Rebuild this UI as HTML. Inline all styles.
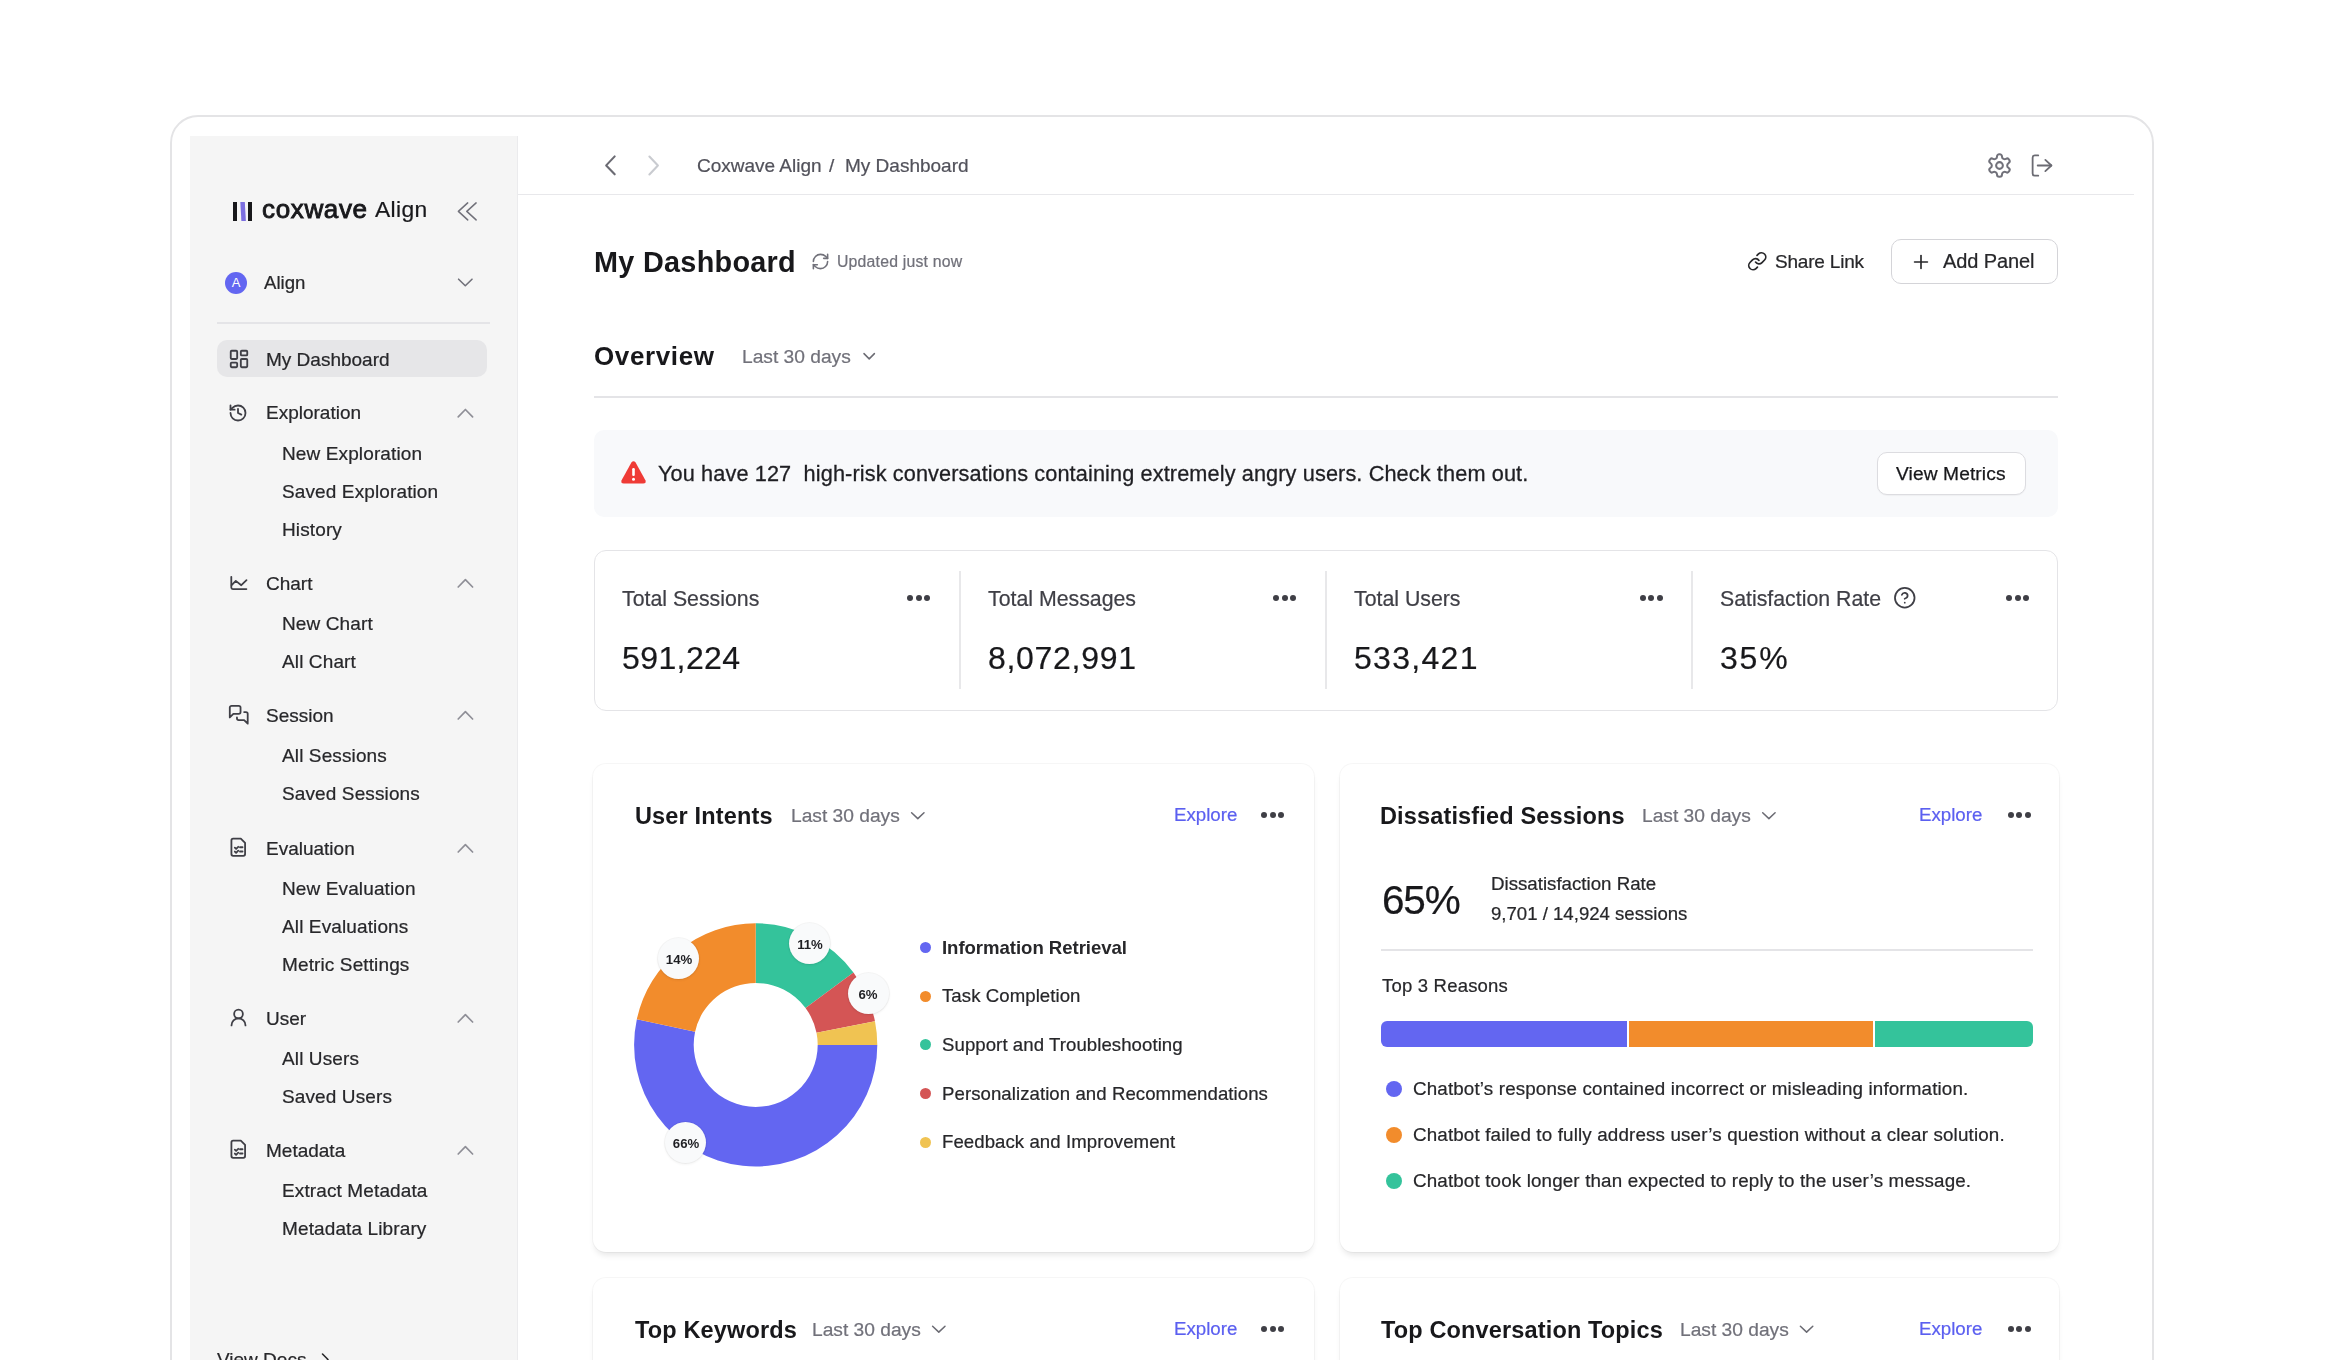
<!DOCTYPE html><html><head><meta charset="utf-8"><style>
html,body{margin:0;padding:0;width:2340px;height:1360px;overflow:hidden;background:#ffffff;}
body{position:relative;font-family:"Liberation Sans",sans-serif;}
.t{will-change:transform}
.t{position:absolute;white-space:nowrap;}
svg{overflow:visible}
</style></head><body>
<div style="position:absolute;left:170px;top:115px;width:1984px;height:1400px;border:2px solid #e4e4e6;border-radius:28px;background:#fff;box-sizing:border-box"></div>
<div style="position:absolute;left:190px;top:136px;width:328px;height:1300px;background:#f5f5f5;border-right:1px solid #ebebed;box-sizing:border-box"></div>
<div style="position:absolute;left:232.6px;top:202px;width:4.2px;height:19px;background:#18181b"></div>
<svg style="position:absolute;left:238px;top:202px;" width="10" height="19" viewBox="0 0 10 19" fill="none"><polygon points="2.3,0 6.8,0 7.9,19 3.4,19" fill="#7c6fe0"/></svg>
<div style="position:absolute;left:248.1px;top:202px;width:4.2px;height:19px;background:#18181b"></div>
<div class="t" style="left:262.0px;top:195.1px;font-size:26px;line-height:29.04px;color:#18181b;font-weight:400;letter-spacing:0.65px;-webkit-text-stroke:0.9px #18181b">coxwave</div>
<div class="t" style="left:375.0px;top:197.4px;font-size:22.8px;line-height:25.47px;color:#18181b;font-weight:400;letter-spacing:0.4px;-webkit-text-stroke:0.22px #18181b;">Align</div>
<div style="position:absolute;left:225px;top:272px;width:22px;height:22px;border-radius:50%;background:#6366f1;color:#fff;font-size:13px;line-height:22px;text-align:center;font-family:'Liberation Sans',sans-serif">A</div>
<div class="t" style="left:263.7px;top:272.7px;font-size:18.6px;line-height:20.78px;color:#27272a;font-weight:400;letter-spacing:0px;-webkit-text-stroke:0.22px #27272a;">Align</div>
<div style="position:absolute;left:217px;top:322px;width:273px;height:1.5px;background:#e4e4e7"></div>
<div style="position:absolute;left:217px;top:340px;width:270px;height:37px;background:#e6e6e8;border-radius:10px"></div>
<svg style="position:absolute;left:227.5px;top:347.5px;" width="22" height="22" viewBox="0 0 24 24" fill="none"><g stroke="#3f3f46" stroke-width="2" stroke-linecap="round" stroke-linejoin="round"><rect x="3" y="3" width="7" height="9" rx="1"/><rect x="14" y="3" width="7" height="5" rx="1"/><rect x="14" y="12" width="7" height="9" rx="1"/><rect x="3" y="16" width="7" height="5" rx="1"/></g></svg>
<div class="t" style="left:266.4px;top:348.6px;font-size:19px;line-height:21.22px;color:#27272a;font-weight:400;letter-spacing:0px;-webkit-text-stroke:0.22px #27272a;">My Dashboard</div>
<svg style="position:absolute;left:228.4px;top:402.6px;" width="20" height="20" viewBox="0 0 24 24" fill="none"><g stroke="#3f3f46" stroke-width="2.16" stroke-linecap="round" stroke-linejoin="round"><path d="M3 12a9 9 0 1 0 9-9 9.75 9.75 0 0 0-6.74 2.74L3 8"/><path d="M3 3v5h5"/><path d="M12 7v5l4 2"/></g></svg>
<div class="t" style="left:266.4px;top:402.4px;font-size:19px;line-height:21.22px;color:#27272a;font-weight:400;letter-spacing:0px;-webkit-text-stroke:0.22px #27272a;">Exploration</div>
<div class="t" style="left:282.0px;top:442.9px;font-size:19px;line-height:21.22px;color:#27272a;font-weight:400;letter-spacing:0.12px;-webkit-text-stroke:0.22px #27272a;">New Exploration</div>
<div class="t" style="left:282.0px;top:480.9px;font-size:19px;line-height:21.22px;color:#27272a;font-weight:400;letter-spacing:0.12px;-webkit-text-stroke:0.22px #27272a;">Saved Exploration</div>
<div class="t" style="left:282.0px;top:518.9px;font-size:19px;line-height:21.22px;color:#27272a;font-weight:400;letter-spacing:0.12px;-webkit-text-stroke:0.22px #27272a;">History</div>
<div class="t" style="left:266.4px;top:572.6px;font-size:19px;line-height:21.22px;color:#27272a;font-weight:400;letter-spacing:0px;-webkit-text-stroke:0.22px #27272a;">Chart</div>
<svg style="position:absolute;left:0;top:0" width="2340" height="1360"><g stroke="#3f3f46" stroke-width="1.8" fill="none" stroke-linecap="round" stroke-linejoin="round"><path d="M231.3 576.8 V587.5999999999999 Q231.3 589.0999999999999 232.8 589.0999999999999 H246.4"/><path d="M231.6 585.1999999999999 L235.8 580.9 L241.3 585.1999999999999 L246.5 580.1999999999999"/></g></svg>
<div class="t" style="left:282.0px;top:613.1px;font-size:19px;line-height:21.22px;color:#27272a;font-weight:400;letter-spacing:0.12px;-webkit-text-stroke:0.22px #27272a;">New Chart</div>
<div class="t" style="left:282.0px;top:651.1px;font-size:19px;line-height:21.22px;color:#27272a;font-weight:400;letter-spacing:0.12px;-webkit-text-stroke:0.22px #27272a;">All Chart</div>
<svg style="position:absolute;left:227.85px;top:704.4499999999999px;" width="21.5" height="21.5" viewBox="0 0 24 24" fill="none"><g stroke="#3f3f46" stroke-width="2.0093023255813955" stroke-linecap="round" stroke-linejoin="round"><path d="M14 9a2 2 0 0 1-2 2H6l-4 4V4a2 2 0 0 1 2-2h8a2 2 0 0 1 2 2z"/><path d="M18 9h2a2 2 0 0 1 2 2v11l-4-4h-6a2 2 0 0 1-2-2v-1"/></g></svg>
<div class="t" style="left:266.4px;top:704.6px;font-size:19px;line-height:21.22px;color:#27272a;font-weight:400;letter-spacing:0px;-webkit-text-stroke:0.22px #27272a;">Session</div>
<div class="t" style="left:282.0px;top:745.1px;font-size:19px;line-height:21.22px;color:#27272a;font-weight:400;letter-spacing:0.12px;-webkit-text-stroke:0.22px #27272a;">All Sessions</div>
<div class="t" style="left:282.0px;top:783.1px;font-size:19px;line-height:21.22px;color:#27272a;font-weight:400;letter-spacing:0.12px;-webkit-text-stroke:0.22px #27272a;">Saved Sessions</div>
<svg style="position:absolute;left:228.35px;top:837.3499999999999px;" width="20.5" height="20.5" viewBox="0 0 24 24" fill="none"><g stroke="#3f3f46" stroke-width="2.107317073170732" stroke-linecap="round" stroke-linejoin="round"><path d="M15 2H6a2 2 0 0 0-2 2v16a2 2 0 0 0 2 2h12a2 2 0 0 0 2-2V7z"/><path d="M8 12.5l1.5 1.5 2.5-2.5"/><path d="M8 17l1.5 1.5 2.5-2.5"/><path d="M14 12h3"/><path d="M14 17h3"/></g></svg>
<div class="t" style="left:266.4px;top:837.6px;font-size:19px;line-height:21.22px;color:#27272a;font-weight:400;letter-spacing:0px;-webkit-text-stroke:0.22px #27272a;">Evaluation</div>
<div class="t" style="left:282.0px;top:878.1px;font-size:19px;line-height:21.22px;color:#27272a;font-weight:400;letter-spacing:0.12px;-webkit-text-stroke:0.22px #27272a;">New Evaluation</div>
<div class="t" style="left:282.0px;top:916.1px;font-size:19px;line-height:21.22px;color:#27272a;font-weight:400;letter-spacing:0.12px;-webkit-text-stroke:0.22px #27272a;">All Evaluations</div>
<div class="t" style="left:282.0px;top:954.1px;font-size:19px;line-height:21.22px;color:#27272a;font-weight:400;letter-spacing:0.12px;-webkit-text-stroke:0.22px #27272a;">Metric Settings</div>
<svg style="position:absolute;left:228.1px;top:1007.1999999999999px;" width="21" height="21" viewBox="0 0 24 24" fill="none"><g stroke="#3f3f46" stroke-width="2.0571428571428574" stroke-linecap="round" stroke-linejoin="round"><circle cx="12" cy="8" r="5"/><path d="M20 21a8 8 0 0 0-16 0"/></g></svg>
<div class="t" style="left:266.4px;top:1007.6px;font-size:19px;line-height:21.22px;color:#27272a;font-weight:400;letter-spacing:0px;-webkit-text-stroke:0.22px #27272a;">User</div>
<div class="t" style="left:282.0px;top:1048.1px;font-size:19px;line-height:21.22px;color:#27272a;font-weight:400;letter-spacing:0.12px;-webkit-text-stroke:0.22px #27272a;">All Users</div>
<div class="t" style="left:282.0px;top:1086.1px;font-size:19px;line-height:21.22px;color:#27272a;font-weight:400;letter-spacing:0.12px;-webkit-text-stroke:0.22px #27272a;">Saved Users</div>
<svg style="position:absolute;left:228.35px;top:1139.35px;" width="20.5" height="20.5" viewBox="0 0 24 24" fill="none"><g stroke="#3f3f46" stroke-width="2.107317073170732" stroke-linecap="round" stroke-linejoin="round"><path d="M15 2H6a2 2 0 0 0-2 2v16a2 2 0 0 0 2 2h12a2 2 0 0 0 2-2V7z"/><path d="M8 12.5l1.5 1.5 2.5-2.5"/><path d="M8 17l1.5 1.5 2.5-2.5"/><path d="M14 12h3"/><path d="M14 17h3"/></g></svg>
<div class="t" style="left:266.4px;top:1139.6px;font-size:19px;line-height:21.22px;color:#27272a;font-weight:400;letter-spacing:0px;-webkit-text-stroke:0.22px #27272a;">Metadata</div>
<div class="t" style="left:282.0px;top:1180.1px;font-size:19px;line-height:21.22px;color:#27272a;font-weight:400;letter-spacing:0.12px;-webkit-text-stroke:0.22px #27272a;">Extract Metadata</div>
<div class="t" style="left:282.0px;top:1218.1px;font-size:19px;line-height:21.22px;color:#27272a;font-weight:400;letter-spacing:0.12px;-webkit-text-stroke:0.22px #27272a;">Metadata Library</div>
<div class="t" style="left:217.4px;top:1348.8px;font-size:19px;line-height:21.22px;color:#27272a;font-weight:400;letter-spacing:0px;-webkit-text-stroke:0.22px #27272a;">View Docs</div>
<div style="position:absolute;left:518px;top:193.8px;width:1616px;height:1.6px;background:#e8e8eb"></div>
<div class="t" style="left:696.7px;top:155.3px;font-size:19px;line-height:21.22px;color:#52525b;font-weight:400;letter-spacing:0px;-webkit-text-stroke:0.22px #52525b;">Coxwave Align</div>
<div class="t" style="left:829.0px;top:155.3px;font-size:19px;line-height:21.22px;color:#52525b;font-weight:400;letter-spacing:0px;-webkit-text-stroke:0.22px #52525b;">/</div>
<div class="t" style="left:845.4px;top:155.3px;font-size:19px;line-height:21.22px;color:#52525b;font-weight:400;letter-spacing:0px;-webkit-text-stroke:0.22px #52525b;">My Dashboard</div>
<svg style="position:absolute;left:1985.5px;top:152px;" width="27" height="27" viewBox="0 0 24 24" fill="none"><g stroke="#71717a" stroke-width="1.8" stroke-linecap="round" stroke-linejoin="round"><path d="M12.22 2h-.44a2 2 0 0 0-2 2v.18a2 2 0 0 1-1 1.73l-.43.25a2 2 0 0 1-2 0l-.15-.08a2 2 0 0 0-2.73.73l-.22.38a2 2 0 0 0 .73 2.73l.15.1a2 2 0 0 1 1 1.72v.51a2 2 0 0 1-1 1.74l-.15.09a2 2 0 0 0-.73 2.73l.22.38a2 2 0 0 0 2.73.73l.15-.08a2 2 0 0 1 2 0l.43.25a2 2 0 0 1 1 1.73V20a2 2 0 0 0 2 2h.44a2 2 0 0 0 2-2v-.18a2 2 0 0 1 1-1.73l.43-.25a2 2 0 0 1 2 0l.15.08a2 2 0 0 0 2.73-.73l.22-.39a2 2 0 0 0-.73-2.73l-.15-.08a2 2 0 0 1-1-1.74v-.5a2 2 0 0 1 1-1.74l.15-.09a2 2 0 0 0 .73-2.73l-.22-.38a2 2 0 0 0-2.73-.73l-.15.08a2 2 0 0 1-2 0l-.43-.25a2 2 0 0 1-1-1.73V4a2 2 0 0 0-2-2z"/><circle cx="12" cy="12" r="3"/></g></svg>
<svg style="position:absolute;left:2026.5px;top:152px;" width="27" height="27" viewBox="0 0 24 24" fill="none"><g stroke="#6b6b73" stroke-width="1.6" stroke-linecap="round" stroke-linejoin="round"><path d="M10 3H7a2 2 0 0 0-2 2v14a2 2 0 0 0 2 2h3"/><path d="M16.3 7l5.4 5-5.4 5"/><path d="M21.6 12H9.5"/></g></svg>
<div class="t" style="left:594.0px;top:245.8px;font-size:28.8px;line-height:32.17px;color:#18181b;font-weight:700;letter-spacing:0.3px;">My Dashboard</div>
<svg style="position:absolute;left:810.5px;top:251.7px;" width="19" height="19" viewBox="0 0 24 24" fill="none"><g stroke="#71717a" stroke-width="2" stroke-linecap="round" stroke-linejoin="round"><path d="M3 12a9 9 0 0 1 9-9 9.75 9.75 0 0 1 6.74 2.74L21 8"/><path d="M21 3v5h-5"/><path d="M21 12a9 9 0 0 1-9 9 9.75 9.75 0 0 1-6.74-2.74L3 16"/><path d="M8 16H3v5"/></g></svg>
<div class="t" style="left:837.3px;top:252.5px;font-size:15.8px;line-height:17.65px;color:#71717a;font-weight:400;letter-spacing:0.2px;-webkit-text-stroke:0.22px #71717a;">Updated just now</div>
<svg style="position:absolute;left:1747.3px;top:251.3px;" width="20.5" height="20.5" viewBox="0 0 24 24" fill="none"><g stroke="#27272a" stroke-width="2" stroke-linecap="round" stroke-linejoin="round"><path d="M10 13a5 5 0 0 0 7.54.54l3-3a5 5 0 0 0-7.07-7.07l-1.72 1.71"/><path d="M14 11a5 5 0 0 0-7.54-.54l-3 3a5 5 0 0 0 7.07 7.07l1.71-1.71"/></g></svg>
<div class="t" style="left:1774.6px;top:251.2px;font-size:19px;line-height:21.22px;color:#27272a;font-weight:400;letter-spacing:-0.2px;-webkit-text-stroke:0.22px #27272a;">Share Link</div>
<div style="position:absolute;left:1891px;top:238.5px;width:167px;height:45.5px;border:1.6px solid #d4d4d8;border-radius:10px;box-sizing:border-box;background:#fff"></div>
<svg style="position:absolute;left:1909.5px;top:250.5px;" width="22" height="22" viewBox="0 0 24 24" fill="none"><g stroke="#27272a" stroke-width="1.8" stroke-linecap="round" stroke-linejoin="round"><path d="M5 12h14"/><path d="M12 5v14"/></g></svg>
<div class="t" style="left:1943.0px;top:250.3px;font-size:20px;line-height:22.34px;color:#27272a;font-weight:400;letter-spacing:-0.1px;-webkit-text-stroke:0.22px #27272a;">Add Panel</div>
<div class="t" style="left:594.0px;top:341.6px;font-size:26px;line-height:29.04px;color:#18181b;font-weight:700;letter-spacing:0.63px;">Overview</div>
<div class="t" style="left:741.7px;top:345.7px;font-size:19.2px;line-height:21.45px;color:#71717a;font-weight:400;letter-spacing:0px;-webkit-text-stroke:0.22px #71717a;">Last 30 days</div>
<div style="position:absolute;left:594px;top:396px;width:1464px;height:2px;background:#e4e4e7"></div>
<div style="position:absolute;left:594px;top:430px;width:1464px;height:87px;background:#f8f9fb;border-radius:10px"></div>
<svg style="position:absolute;left:620.5px;top:461px;" width="25" height="23" viewBox="0 0 25 23" fill="none"><path d="M10.4 1.6 Q12.5 -1.2 14.6 1.6 L24.4 19.2 Q25.6 22.5 22.2 22.5 L2.8 22.5 Q-0.6 22.5 0.6 19.2 Z" fill="#ef3b36"/><rect x="11.2" y="7" width="2.6" height="8" rx="1.2" fill="#fff"/><circle cx="12.5" cy="18.3" r="1.5" fill="#fff"/></svg>
<div class="t" style="left:657.5px;top:461.6px;font-size:21.7px;line-height:24.24px;color:#1f1f23;font-weight:400;letter-spacing:0.12px;-webkit-text-stroke:0.3px #1f1f23">You have 127&nbsp; high-risk conversations containing extremely angry users. Check them out.</div>
<div style="position:absolute;left:1876.5px;top:452px;width:149.5px;height:43px;background:#fff;border:1.2px solid #dcdce0;border-radius:10px;box-sizing:border-box;box-shadow:0 1px 1px rgba(0,0,0,0.04)"></div>
<div class="t" style="left:1895.9px;top:463.2px;font-size:19.2px;line-height:21.45px;color:#18181b;font-weight:400;letter-spacing:0.1px;-webkit-text-stroke:0.25px #18181b">View Metrics</div>
<div style="position:absolute;left:594px;top:549.5px;width:1464px;height:161.5px;border:1.5px solid #e4e4e7;border-radius:12px;box-sizing:border-box;background:#fff"></div>
<div style="position:absolute;left:959px;top:571px;width:1.5px;height:118px;background:#e8e8ea"></div>
<div style="position:absolute;left:1325px;top:571px;width:1.5px;height:118px;background:#e8e8ea"></div>
<div style="position:absolute;left:1691px;top:571px;width:1.5px;height:118px;background:#e8e8ea"></div>
<div class="t" style="left:621.5px;top:587.7px;font-size:21.3px;line-height:23.79px;color:#3f3f46;font-weight:400;letter-spacing:0px;-webkit-text-stroke:0.22px #3f3f46;">Total Sessions</div>
<div class="t" style="left:621.5px;top:641.0px;font-size:32px;line-height:35.74px;color:#18181b;font-weight:400;letter-spacing:0.4px;-webkit-text-stroke:0.22px #18181b;">591,224</div>
<div style="position:absolute;left:907.0px;top:594.7px;width:6px;height:6px;border-radius:50%;background:#3f3f46"></div>
<div style="position:absolute;left:915.5px;top:594.7px;width:6px;height:6px;border-radius:50%;background:#3f3f46"></div>
<div style="position:absolute;left:924.0px;top:594.7px;width:6px;height:6px;border-radius:50%;background:#3f3f46"></div>
<div class="t" style="left:987.5px;top:587.7px;font-size:21.3px;line-height:23.79px;color:#3f3f46;font-weight:400;letter-spacing:0px;-webkit-text-stroke:0.22px #3f3f46;">Total Messages</div>
<div class="t" style="left:987.5px;top:641.0px;font-size:32px;line-height:35.74px;color:#18181b;font-weight:400;letter-spacing:0.7px;-webkit-text-stroke:0.22px #18181b;">8,072,991</div>
<div style="position:absolute;left:1273.4px;top:594.7px;width:6px;height:6px;border-radius:50%;background:#3f3f46"></div>
<div style="position:absolute;left:1281.9px;top:594.7px;width:6px;height:6px;border-radius:50%;background:#3f3f46"></div>
<div style="position:absolute;left:1290.4px;top:594.7px;width:6px;height:6px;border-radius:50%;background:#3f3f46"></div>
<div class="t" style="left:1353.5px;top:587.7px;font-size:21.3px;line-height:23.79px;color:#3f3f46;font-weight:400;letter-spacing:0px;-webkit-text-stroke:0.22px #3f3f46;">Total Users</div>
<div class="t" style="left:1353.5px;top:641.0px;font-size:32px;line-height:35.74px;color:#18181b;font-weight:400;letter-spacing:1.3px;-webkit-text-stroke:0.22px #18181b;">533,421</div>
<div style="position:absolute;left:1639.9px;top:594.7px;width:6px;height:6px;border-radius:50%;background:#3f3f46"></div>
<div style="position:absolute;left:1648.4px;top:594.7px;width:6px;height:6px;border-radius:50%;background:#3f3f46"></div>
<div style="position:absolute;left:1656.9px;top:594.7px;width:6px;height:6px;border-radius:50%;background:#3f3f46"></div>
<div class="t" style="left:1719.5px;top:587.7px;font-size:21.3px;line-height:23.79px;color:#3f3f46;font-weight:400;letter-spacing:0px;-webkit-text-stroke:0.22px #3f3f46;">Satisfaction Rate</div>
<div class="t" style="left:1719.5px;top:641.0px;font-size:32px;line-height:35.74px;color:#18181b;font-weight:400;letter-spacing:1.8px;-webkit-text-stroke:0.22px #18181b;">35%</div>
<div style="position:absolute;left:2006.3px;top:594.7px;width:6px;height:6px;border-radius:50%;background:#3f3f46"></div>
<div style="position:absolute;left:2014.8px;top:594.7px;width:6px;height:6px;border-radius:50%;background:#3f3f46"></div>
<div style="position:absolute;left:2023.3px;top:594.7px;width:6px;height:6px;border-radius:50%;background:#3f3f46"></div>
<svg style="position:absolute;left:1893.4px;top:586px;" width="23.5" height="23.5" viewBox="0 0 24 24" fill="none"><g stroke="#3f3f46" stroke-width="1.8" stroke-linecap="round" stroke-linejoin="round"><circle cx="12" cy="12" r="10"/><path d="M9.09 9a3 3 0 0 1 5.83 1c0 2-3 3-3 3"/><path d="M12 17h.01"/></g></svg>
<div style="position:absolute;left:593px;top:764px;width:721px;height:488px;background:#fff;border-radius:13px;box-shadow:0 0 0 1px rgba(0,0,0,0.035),0 5px 6px -2px rgba(0,0,0,0.1)"></div>
<div style="position:absolute;left:1340px;top:764px;width:719px;height:488px;background:#fff;border-radius:13px;box-shadow:0 0 0 1px rgba(0,0,0,0.035),0 5px 6px -2px rgba(0,0,0,0.1)"></div>
<div style="position:absolute;left:593px;top:1278px;width:721px;height:300px;background:#fff;border-radius:13px;box-shadow:0 0 0 1px rgba(0,0,0,0.035),0 5px 6px -2px rgba(0,0,0,0.1)"></div>
<div style="position:absolute;left:1340px;top:1278px;width:719px;height:300px;background:#fff;border-radius:13px;box-shadow:0 0 0 1px rgba(0,0,0,0.035),0 5px 6px -2px rgba(0,0,0,0.1)"></div>
<div class="t" style="left:635.0px;top:803.2px;font-size:23.5px;line-height:26.25px;color:#18181b;font-weight:700;letter-spacing:0.15px;">User Intents</div>
<div class="t" style="left:791.2px;top:804.6px;font-size:19.2px;line-height:21.45px;color:#71717a;font-weight:400;letter-spacing:0px;-webkit-text-stroke:0.22px #71717a;">Last 30 days</div>
<div class="t" style="left:1174.0px;top:805.1px;font-size:18.7px;line-height:20.89px;color:#5b5ff0;font-weight:400;letter-spacing:0px;-webkit-text-stroke:0.22px #5b5ff0;">Explore</div>
<div style="position:absolute;left:1261.3px;top:812.4px;width:6px;height:6px;border-radius:50%;background:#3f3f46"></div>
<div style="position:absolute;left:1269.8px;top:812.4px;width:6px;height:6px;border-radius:50%;background:#3f3f46"></div>
<div style="position:absolute;left:1278.3px;top:812.4px;width:6px;height:6px;border-radius:50%;background:#3f3f46"></div>
<div class="t" style="left:1380.0px;top:803.2px;font-size:23.5px;line-height:26.25px;color:#18181b;font-weight:700;letter-spacing:0.15px;">Dissatisfied Sessions</div>
<div class="t" style="left:1642.3px;top:804.6px;font-size:19.2px;line-height:21.45px;color:#71717a;font-weight:400;letter-spacing:0px;-webkit-text-stroke:0.22px #71717a;">Last 30 days</div>
<div class="t" style="left:1918.5px;top:805.1px;font-size:18.7px;line-height:20.89px;color:#5b5ff0;font-weight:400;letter-spacing:0px;-webkit-text-stroke:0.22px #5b5ff0;">Explore</div>
<div style="position:absolute;left:2007.5px;top:812.4px;width:6px;height:6px;border-radius:50%;background:#3f3f46"></div>
<div style="position:absolute;left:2016.0px;top:812.4px;width:6px;height:6px;border-radius:50%;background:#3f3f46"></div>
<div style="position:absolute;left:2024.5px;top:812.4px;width:6px;height:6px;border-radius:50%;background:#3f3f46"></div>
<div class="t" style="left:635.0px;top:1317.2px;font-size:23.5px;line-height:26.25px;color:#18181b;font-weight:700;letter-spacing:0.15px;">Top Keywords</div>
<div class="t" style="left:812.0px;top:1318.6px;font-size:19.2px;line-height:21.45px;color:#71717a;font-weight:400;letter-spacing:0px;-webkit-text-stroke:0.22px #71717a;">Last 30 days</div>
<div class="t" style="left:1174.0px;top:1319.1px;font-size:18.7px;line-height:20.89px;color:#5b5ff0;font-weight:400;letter-spacing:0px;-webkit-text-stroke:0.22px #5b5ff0;">Explore</div>
<div style="position:absolute;left:1261.3px;top:1326.0px;width:6px;height:6px;border-radius:50%;background:#3f3f46"></div>
<div style="position:absolute;left:1269.8px;top:1326.0px;width:6px;height:6px;border-radius:50%;background:#3f3f46"></div>
<div style="position:absolute;left:1278.3px;top:1326.0px;width:6px;height:6px;border-radius:50%;background:#3f3f46"></div>
<div class="t" style="left:1381.0px;top:1317.2px;font-size:23.5px;line-height:26.25px;color:#18181b;font-weight:700;letter-spacing:0.15px;">Top Conversation Topics</div>
<div class="t" style="left:1680.0px;top:1318.6px;font-size:19.2px;line-height:21.45px;color:#71717a;font-weight:400;letter-spacing:0px;-webkit-text-stroke:0.22px #71717a;">Last 30 days</div>
<div class="t" style="left:1918.5px;top:1319.1px;font-size:18.7px;line-height:20.89px;color:#5b5ff0;font-weight:400;letter-spacing:0px;-webkit-text-stroke:0.22px #5b5ff0;">Explore</div>
<div style="position:absolute;left:2007.5px;top:1326.0px;width:6px;height:6px;border-radius:50%;background:#3f3f46"></div>
<div style="position:absolute;left:2016.0px;top:1326.0px;width:6px;height:6px;border-radius:50%;background:#3f3f46"></div>
<div style="position:absolute;left:2024.5px;top:1326.0px;width:6px;height:6px;border-radius:50%;background:#3f3f46"></div>
<svg style="position:absolute;left:0;top:0" width="2340" height="1360"><path d="M755.70 923.30 A121.6 121.6 0 0 1 853.45 972.57 L805.54 1008.02 A62 62 0 0 0 755.70 982.90 Z" fill="#34c39b"/><path d="M853.45 972.57 A121.6 121.6 0 0 1 874.98 1021.28 L816.52 1032.86 A62 62 0 0 0 805.54 1008.02 Z" fill="#d45555"/><path d="M874.98 1021.28 A121.6 121.6 0 0 1 877.30 1044.90 L817.70 1044.90 A62 62 0 0 0 816.52 1032.86 Z" fill="#f0c352"/><path d="M877.30 1044.90 A121.6 121.6 0 1 1 636.85 1019.20 L695.10 1031.80 A62 62 0 1 0 817.70 1044.90 Z" fill="#6366f1"/><path d="M636.85 1019.20 A121.6 121.6 0 0 1 755.70 923.30 L755.70 982.90 A62 62 0 0 0 695.10 1031.80 Z" fill="#f28c2c"/></svg>
<div style="position:absolute;left:658.2px;top:937.6px;width:41px;height:41px;border-radius:50%;background:#f9fafb;box-shadow:0 0 0 1px rgba(0,0,0,0.04),0 1px 3px rgba(0,0,0,0.07)"></div>
<div class="t" style="left:648.7px;top:952.7px;font-size:13.2px;line-height:14.74px;color:#1f1f23;font-weight:700;letter-spacing:0px;"><span style="display:inline-block;width:60px;text-align:center">14%</span></div>
<div style="position:absolute;left:789.3px;top:922.7px;width:41px;height:41px;border-radius:50%;background:#f9fafb;box-shadow:0 0 0 1px rgba(0,0,0,0.04),0 1px 3px rgba(0,0,0,0.07)"></div>
<div class="t" style="left:779.8px;top:937.8px;font-size:13.2px;line-height:14.74px;color:#1f1f23;font-weight:700;letter-spacing:0px;"><span style="display:inline-block;width:60px;text-align:center">11%</span></div>
<div style="position:absolute;left:847.6px;top:972.6px;width:41px;height:41px;border-radius:50%;background:#f9fafb;box-shadow:0 0 0 1px rgba(0,0,0,0.04),0 1px 3px rgba(0,0,0,0.07)"></div>
<div class="t" style="left:838.1px;top:987.7px;font-size:13.2px;line-height:14.74px;color:#1f1f23;font-weight:700;letter-spacing:0px;"><span style="display:inline-block;width:60px;text-align:center">6%</span></div>
<div style="position:absolute;left:665.4px;top:1122.0px;width:41px;height:41px;border-radius:50%;background:#f9fafb;box-shadow:0 0 0 1px rgba(0,0,0,0.04),0 1px 3px rgba(0,0,0,0.07)"></div>
<div class="t" style="left:655.9px;top:1137.1px;font-size:13.2px;line-height:14.74px;color:#1f1f23;font-weight:700;letter-spacing:0px;"><span style="display:inline-block;width:60px;text-align:center">66%</span></div>
<div style="position:absolute;left:920.2px;top:942.1px;width:11px;height:11px;border-radius:50%;background:#6366f1"></div>
<div class="t" style="left:942.0px;top:937.7px;font-size:18.6px;line-height:20.78px;color:#27272a;font-weight:700;letter-spacing:-0.05px;">Information Retrieval</div>
<div style="position:absolute;left:920.2px;top:990.7px;width:11px;height:11px;border-radius:50%;background:#f28c2c"></div>
<div class="t" style="left:942.0px;top:986.3px;font-size:18.6px;line-height:20.78px;color:#27272a;font-weight:400;letter-spacing:0.07px;-webkit-text-stroke:0.22px #27272a;">Task Completion</div>
<div style="position:absolute;left:920.2px;top:1039.3px;width:11px;height:11px;border-radius:50%;background:#34c39b"></div>
<div class="t" style="left:942.0px;top:1034.9px;font-size:18.6px;line-height:20.78px;color:#27272a;font-weight:400;letter-spacing:0.07px;-webkit-text-stroke:0.22px #27272a;">Support and Troubleshooting</div>
<div style="position:absolute;left:920.2px;top:1087.9px;width:11px;height:11px;border-radius:50%;background:#d45555"></div>
<div class="t" style="left:942.0px;top:1083.5px;font-size:18.6px;line-height:20.78px;color:#27272a;font-weight:400;letter-spacing:0.07px;-webkit-text-stroke:0.22px #27272a;">Personalization and Recommendations</div>
<div style="position:absolute;left:920.2px;top:1136.5px;width:11px;height:11px;border-radius:50%;background:#f0c352"></div>
<div class="t" style="left:942.0px;top:1132.1px;font-size:18.6px;line-height:20.78px;color:#27272a;font-weight:400;letter-spacing:0.07px;-webkit-text-stroke:0.22px #27272a;">Feedback and Improvement</div>
<div class="t" style="left:1382.0px;top:878.3px;font-size:40.5px;line-height:45.24px;color:#18181b;font-weight:400;letter-spacing:-1.2px;-webkit-text-stroke:0.22px #18181b;">65%</div>
<div class="t" style="left:1490.6px;top:873.9px;font-size:18.7px;line-height:20.89px;color:#27272a;font-weight:400;letter-spacing:0px;-webkit-text-stroke:0.22px #27272a;">Dissatisfaction Rate</div>
<div class="t" style="left:1490.6px;top:903.5px;font-size:18.6px;line-height:20.78px;color:#27272a;font-weight:400;letter-spacing:0px;-webkit-text-stroke:0.22px #27272a;">9,701 / 14,924 sessions</div>
<div style="position:absolute;left:1381px;top:949px;width:652px;height:1.5px;background:#e4e4e7"></div>
<div class="t" style="left:1381.6px;top:975.5px;font-size:18.5px;line-height:20.66px;color:#27272a;font-weight:400;letter-spacing:0.2px;-webkit-text-stroke:0.22px #27272a;">Top 3 Reasons</div>
<div style="position:absolute;left:1380.6px;top:1020.7px;width:652px;height:26.6px;border-radius:6px;overflow:hidden;background:linear-gradient(90deg,#6366f1 0,#6366f1 245.6px,#fff 245.6px,#fff 248.2px,#f28c2c 248.2px,#f28c2c 491.6px,#fff 491.6px,#fff 493.8px,#34c39b 493.8px)"></div>
<div style="position:absolute;left:1386px;top:1080.6px;width:16px;height:16px;border-radius:50%;background:#6366f1"></div>
<div class="t" style="left:1413.2px;top:1078.4px;font-size:18.8px;line-height:21.0px;color:#27272a;font-weight:400;letter-spacing:0.15px;-webkit-text-stroke:0.22px #27272a;">Chatbot’s response contained incorrect or misleading information.</div>
<div style="position:absolute;left:1386px;top:1126.5px;width:16px;height:16px;border-radius:50%;background:#f28c2c"></div>
<div class="t" style="left:1413.2px;top:1124.3px;font-size:18.8px;line-height:21.0px;color:#27272a;font-weight:400;letter-spacing:0.15px;-webkit-text-stroke:0.22px #27272a;">Chatbot failed to fully address user’s question without a clear solution.</div>
<div style="position:absolute;left:1386px;top:1172.5px;width:16px;height:16px;border-radius:50%;background:#34c39b"></div>
<div class="t" style="left:1413.2px;top:1170.3px;font-size:18.8px;line-height:21.0px;color:#27272a;font-weight:400;letter-spacing:0.15px;-webkit-text-stroke:0.22px #27272a;">Chatbot took longer than expected to reply to the user’s message.</div>
<svg style="position:absolute;left:0;top:0" width="2340" height="1360"><polyline points="467.70,202.90 458.40,211.40 467.70,219.90" stroke="#71717a" stroke-width="1.5" stroke-linecap="round" stroke-linejoin="round" fill="none"/><polyline points="476.10,202.90 466.80,211.40 476.10,219.90" stroke="#71717a" stroke-width="1.5" stroke-linecap="round" stroke-linejoin="round" fill="none"/><polyline points="458.60,279.20 465.30,285.70 472.00,279.20" stroke="#71717a" stroke-width="1.6" stroke-linecap="round" stroke-linejoin="round" fill="none"/><polyline points="458.20,416.80 465.40,409.50 472.60,416.80" stroke="#8f8f97" stroke-width="1.7" stroke-linecap="round" stroke-linejoin="round" fill="none"/><polyline points="458.20,587.00 465.40,579.70 472.60,587.00" stroke="#8f8f97" stroke-width="1.7" stroke-linecap="round" stroke-linejoin="round" fill="none"/><polyline points="458.20,719.00 465.40,711.70 472.60,719.00" stroke="#8f8f97" stroke-width="1.7" stroke-linecap="round" stroke-linejoin="round" fill="none"/><polyline points="458.20,852.00 465.40,844.70 472.60,852.00" stroke="#8f8f97" stroke-width="1.7" stroke-linecap="round" stroke-linejoin="round" fill="none"/><polyline points="458.20,1022.00 465.40,1014.70 472.60,1022.00" stroke="#8f8f97" stroke-width="1.7" stroke-linecap="round" stroke-linejoin="round" fill="none"/><polyline points="458.20,1154.00 465.40,1146.70 472.60,1154.00" stroke="#8f8f97" stroke-width="1.7" stroke-linecap="round" stroke-linejoin="round" fill="none"/><polyline points="322.50,1354.00 328.00,1359.50 322.50,1365.00" stroke="#27272a" stroke-width="1.6" stroke-linecap="round" stroke-linejoin="round" fill="none"/><polyline points="614.70,156.40 606.20,165.40 614.70,174.30" stroke="#6b6b73" stroke-width="2.1" stroke-linecap="round" stroke-linejoin="round" fill="none"/><polyline points="649.40,156.60 657.90,165.50 649.40,174.40" stroke="#c9cbd0" stroke-width="2.1" stroke-linecap="round" stroke-linejoin="round" fill="none"/><polyline points="864.00,353.60 869.20,358.90 874.40,353.60" stroke="#6b6b73" stroke-width="1.5" stroke-linecap="round" stroke-linejoin="round" fill="none"/><polyline points="911.60,812.70 917.80,818.60 924.00,812.70" stroke="#6b6b73" stroke-width="1.5" stroke-linecap="round" stroke-linejoin="round" fill="none"/><polyline points="1762.70,812.70 1768.90,818.60 1775.10,812.70" stroke="#6b6b73" stroke-width="1.5" stroke-linecap="round" stroke-linejoin="round" fill="none"/><polyline points="932.60,1326.20 938.80,1332.10 945.00,1326.20" stroke="#6b6b73" stroke-width="1.5" stroke-linecap="round" stroke-linejoin="round" fill="none"/><polyline points="1800.40,1326.20 1806.60,1332.10 1812.80,1326.20" stroke="#6b6b73" stroke-width="1.5" stroke-linecap="round" stroke-linejoin="round" fill="none"/></svg>
</body></html>
